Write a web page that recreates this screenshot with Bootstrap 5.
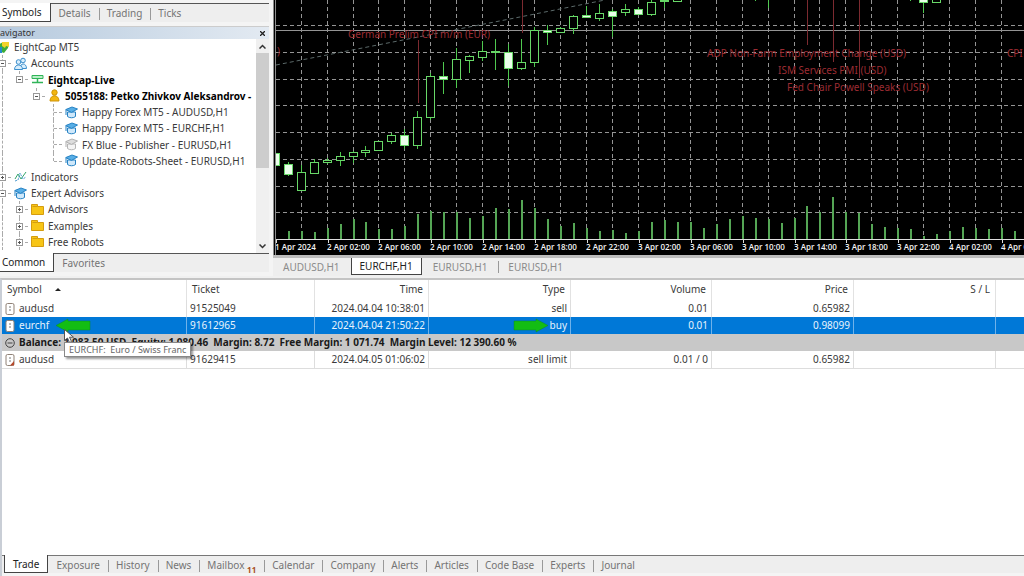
<!DOCTYPE html>
<html lang="en">
<head>
<meta charset="utf-8">
<meta name="viewport" content="width=device-width, initial-scale=1">
<title>MetaTrader 5</title>
<link rel="stylesheet" href="https://cdn.jsdelivr.net/npm/bootstrap@5.3.0/dist/css/bootstrap.min.css">
<style>
  body { font: 10px/16px "Noto Sans", "Open Sans", sans-serif; color: #3a3a3a; background: #f0f0f0; overflow: hidden; }
  button { font: inherit; color: inherit; background: none; border: 0; padding: 0; }
  ul { list-style: none; margin: 0; padding: 0; }

  .side { width: 273px; background: #f4f4f4; overflow: hidden; padding-top: 3px; }
  .side-inner { width: 269px; }
  .tabstrip { background: #eee; color: #747474; border-top: 1px solid #555; height: 19px; }
  .tabstrip button { padding: 0 8px; height: 18px; position: relative; white-space: nowrap; flex: none; line-height: 16px; }
  .tabstrip button + button:not(.first)::before { content: ""; position: absolute; left: 0; top: 4px; height: 12px; border-left: 1px solid #999; }
  .tabstrip .on { background: #fff; color: #222; border-right: 1px solid #444; border-bottom: 1px solid #444; margin-top: -1px; height: 19px; }
  .side .tabstrip .on { padding-left: 2px; }
  .rule { height: 5px; border-bottom: 1px solid #ccc; }
  .navhead { height: 12px; line-height: 12px; font-size: 9px; background: linear-gradient(90deg, #b6cade, #e3eaf2); color: #333; }
  .tree { height: 214px; background: #fff; }
  .tree ul { margin-left: -6px; padding-bottom: 3px; }
  .tree li { flex: 1; white-space: nowrap; }
  .tree li > svg { width: 13px; height: 13px; margin: 0 4px 0 3px; flex: none; }
  .rail { width: 17px; position: relative; align-self: stretch; flex: none; }
  .rail.v::before { content: ""; position: absolute; left: 8px; top: 0; bottom: 0; border-left: 1px dashed #aaa; }
  .rail.end::before { bottom: 50%; }
  .rail.h::after { content: ""; position: absolute; left: 9px; right: 0; top: 8px; border-top: 1px dashed #aaa; }
  .rail button { position: absolute; z-index: 1; left: 5px; top: 5px; width: 7px; height: 7px; border: 1px solid #999; background: #fff; }
  .rail button::before { content: ""; position: absolute; left: 1px; right: 1px; top: 2px; border-top: 1px solid #555; }
  .rail .plus::after { content: ""; position: absolute; top: 1px; bottom: 1px; left: 2px; border-left: 1px solid #555; }
  .scroll { width: 13px; background: #f0f0f0; flex: none; }
  .scroll button { height: 14px; line-height: 0; }
  .thumb { height: 115px; background: #cdcdcd; }

  .chartbox { border-left: 3px double #8c8c8c; background: #000; line-height: 0; }
  .chartbox svg { width: 100%; height: 255px; }
  .chart-tabs { border-top: 3px solid #bcbcbc; height: 21px; color: #8b8b8b; background: #eee; }
  .chart-tabs button { padding: 0 10px; height: 17px; margin-right: 1px; }
  .chart-tabs .on { background: #fff; color: #222; padding: 0 8px; border: solid #444; border-width: 0 1px 1px; }
  .chart-tabs .sep { position: relative; }
  .chart-tabs .sep::before { content: ""; position: absolute; left: 0; top: 3px; height: 12px; border-left: 1px solid #999; }

  .toolbox { border-top: 2px solid #c4c4c4; border-left: 2px solid #c9ced6; background: #fff; margin-top: 2px; }
  .trades { table-layout: fixed; width: 100%; border-collapse: separate; border-spacing: 0; }
  .trades th { font-weight: 400; height: 20px; padding: 0 5px 2px; border-right: 1px solid #e2e2e2; line-height: 18px; }
  .trades td { height: 17px; padding: 0 3px; line-height: 17px; border-right: 1px solid #ddd; white-space: nowrap; position: relative; }
  .trades tbody tr:last-child td { border-bottom: 1px solid #ddd; }
  .trades th:last-child, .trades td:last-child { border-right: 0; }
  .trades .sel td { background: #0078d7; color: #e8f3fc; border-right-color: #6fb2ea; }
  .trades .sum td { background: #c8c8c8; color: #1a1a1a; font-weight: 700; }
  .trades .ico { width: 10px; height: 12px; margin-right: 4px; }
  .over { position: absolute; overflow: visible; }
  .tip { position: absolute; z-index: 3; left: 62px; top: 25px; height: 15px; line-height: 13px; font-size: 9px; padding: 0 4px; background: #fff; color: #666; border: 1px solid #888; box-shadow: 2px 2px 2px rgba(0,0,0,.4); }
  .bottom { border-left: 2px solid #c9ced6; background: #f4f4f4; padding-bottom: 3px; }
  .bottom .tabstrip { height: 18px; padding-left: 2px; border-top-color: #777; }
  .bottom .tabstrip button { height: 17px; }
  .bottom .tabstrip .on { height: 18px; border-left: 1px solid #444; }
  .unread { font-size: 8px; font-weight: 700; line-height: 0; color: #a8501c; vertical-align: -4px; }
</style>
</head>
<body class="d-flex flex-column min-vh-100">

<svg width="0" height="0" class="position-absolute" aria-hidden="true">
  <symbol id="cap" viewBox="0 0 13 13"><path d="M2.500 6v4.500c2 1.700 6 1.700 8 0V6z" fill="#cfe8fa" stroke="#2682c4"/><path d="M.7 3.600 7 1l5.500 2-6 3.400z" fill="#58aee6" stroke="#2682c4"/><path d="M1 4v5" stroke="#2682c4"/></symbol>
  <symbol id="capoff" viewBox="0 0 13 13"><path d="M2.500 6v4.500c2 1.700 6 1.700 8 0V6z" fill="#f4f4f4" stroke="#b5b5b5"/><path d="M.7 3.600 7 1l5.500 2-6 3.400z" fill="#ddd" stroke="#b0b0b0"/><path d="M1 4v5" stroke="#b0b0b0"/></symbol>
  <symbol id="folder" viewBox="0 0 13 13"><path d="M.5 1.500h6v2h6v8H.5z" fill="#f7c516" stroke="#d49c10"/><path d="M6.500 3.500h-5" stroke="#d49c10"/></symbol>
  <symbol id="doc" viewBox="0 0 10 12"><rect x="1" y=".5" width="8" height="11" rx="1.500" fill="#fff" stroke="#8f8176"/><path d="M4 4h2M4 7h2" stroke="#777"/></symbol>
</svg>

<div class="d-flex">
  <aside class="side flex-shrink-0">
    <div class="side-inner d-flex flex-column">
      <nav class="tabstrip d-flex" aria-label="Market watch">
        <button class="on">Symbols</button><button class="first">Details</button><button>Trading</button><button>Ticks</button>
      </nav>
      <div class="rule"></div>
      <div class="navhead d-flex justify-content-between pe-1"><span>avigator</span><button aria-label="Close"><svg width="5" height="5"><path d="M0 0l5 5M5 0L0 5" stroke="#222" stroke-width="1.300"/></svg></button></div>
      <div class="tree d-flex">
        <ul class="d-flex flex-column flex-fill">
          <li class="d-flex align-items-center"><svg viewBox="0 0 13 13"><path d="M1 4l5-3 6 1-1 5-4 5-5-2z" fill="#3dad3a"/><path d="M5 1h7v5l-3-1-1 2-3-2z" fill="#f3d22b"/><path d="M1 6h4v6H2z" fill="#2689cf"/></svg>EightCap MT5</li>
          <li class="d-flex align-items-center"><span class="rail v h"><button aria-label="Collapse"></button></span><svg viewBox="0 0 13 13" fill="#d9eefc" stroke="#3c8fcd"><circle cx="9" cy="3.500" r="2.300"/><path d="M6 11.500c0-6 6.500-6 6.500 0z"/><circle cx="4.500" cy="5" r="2.300"/><path d="M.5 12.500c0-6 8-6 8 0z"/></svg>Accounts</li>
          <li class="d-flex align-items-center fw-bold text-black"><span class="rail v"></span><span class="rail v end h"><button aria-label="Collapse"></button></span><svg viewBox="0 0 13 13"><path d="M1 2.500h11v3H1z" fill="#b9efc7" stroke="#30b458"/><path d="M6.500 6v3M1 9.500h11" stroke="#30b458" stroke-width="1.500"/></svg>Eightcap-Live</li>
          <li class="d-flex align-items-center fw-bold text-black"><span class="rail v"></span><span class="rail"></span><span class="rail v end h"><button aria-label="Collapse"></button></span><svg viewBox="0 0 13 13" fill="#f3b712" stroke="#cf9408"><circle cx="6.500" cy="3.500" r="2.700"/><path d="M2 12c0-7 9-7 9 0z"/></svg>5055188: Petko Zhivkov Aleksandrov -</li>
          <li class="d-flex align-items-center"><span class="rail v"></span><span class="rail"></span><span class="rail"></span><span class="rail v h"></span><svg><use href="#cap"/></svg>Happy Forex MT5 - AUDUSD,H1</li>
          <li class="d-flex align-items-center"><span class="rail v"></span><span class="rail"></span><span class="rail"></span><span class="rail v h"></span><svg><use href="#cap"/></svg>Happy Forex MT5 - EURCHF,H1</li>
          <li class="d-flex align-items-center"><span class="rail v"></span><span class="rail"></span><span class="rail"></span><span class="rail v h"></span><svg><use href="#capoff"/></svg>FX Blue - Publisher - EURUSD,H1</li>
          <li class="d-flex align-items-center"><span class="rail v"></span><span class="rail"></span><span class="rail"></span><span class="rail v end h"></span><svg><use href="#cap"/></svg>Update-Robots-Sheet - EURUSD,H1</li>
          <li class="d-flex align-items-center"><span class="rail v h"><button class="plus" aria-label="Expand"></button></span><svg viewBox="0 0 13 13" fill="none"><path d="M1 9l3-5 3 5 5-7" stroke="#35a66b"/><path d="M1 11l3-1 2-7 3 6 3-2" stroke="#4e9bd0" stroke-dasharray="2 1"/></svg>Indicators</li>
          <li class="d-flex align-items-center"><span class="rail v h"><button aria-label="Collapse"></button></span><svg><use href="#cap"/></svg>Expert Advisors</li>
          <li class="d-flex align-items-center"><span class="rail v"></span><span class="rail v h"><button class="plus" aria-label="Expand"></button></span><svg><use href="#folder"/></svg>Advisors</li>
          <li class="d-flex align-items-center"><span class="rail v"></span><span class="rail v h"><button class="plus" aria-label="Expand"></button></span><svg><use href="#folder"/></svg>Examples</li>
          <li class="d-flex align-items-center"><span class="rail v"></span><span class="rail v h"><button class="plus" aria-label="Expand"></button></span><svg><use href="#folder"/></svg>Free Robots</li>
        </ul>
        <div class="scroll d-flex flex-column">
          <button aria-label="Scroll up"><svg width="7" height="5"><path d="M.5 4.500l3-3 3 3" fill="none" stroke="#333" stroke-width="1.500"/></svg></button>
          <div class="thumb"></div>
          <button class="mt-auto" aria-label="Scroll down"><svg width="7" height="5"><path d="M.5.5l3 3 3-3" fill="none" stroke="#333" stroke-width="1.500"/></svg></button>
        </div>
      </div>
      <nav class="tabstrip d-flex" aria-label="Navigator views"><button class="on">Common</button><button class="first">Favorites</button></nav>
    </div>
  </aside>

  <main class="flex-fill overflow-hidden">
    <div class="chartbox">
      <svg id="chart" viewBox="276 0 748 255" preserveAspectRatio="xMinYMin slice" role="img" aria-label="EURCHF hourly chart"></svg>
    </div>
    <nav class="chart-tabs d-flex" aria-label="Charts">
      <button>AUDUSD,H1</button><button class="on">EURCHF,H1</button><button>EURUSD,H1</button><button class="sep">EURUSD,H1</button>
    </nav>
  </main>
</div>

<section class="toolbox flex-fill">
  <table class="trades">
    <colgroup><col style="width:185px"><col style="width:128px"><col style="width:114px"><col style="width:142px"><col style="width:141px"><col style="width:142px"><col style="width:142px"><col></colgroup>
    <thead>
      <tr><th>Symbol <svg class="ms-2" width="10" height="8"><path d="M3 5l3-3 3 3z" fill="#222"/></svg></th><th>Ticket</th><th class="text-end">Time</th><th class="text-end">Type</th><th class="text-end">Volume</th><th class="text-end">Price</th><th class="text-end">S / L</th><th></th></tr>
    </thead>
    <tbody>
      <tr><td><svg class="ico"><use href="#doc"/></svg>audusd</td><td>91525049</td><td class="text-end">2024.04.04 10:38:01</td><td class="text-end">sell</td><td class="text-end">0.01</td><td class="text-end">0.65982</td><td></td><td></td></tr>
      <tr class="sel"><td><svg class="ico"><use href="#doc"/></svg>eurchf
          <svg class="over" style="left:54px;top:2px" width="34" height="13"><path d="M0 6.500L12 0v2h22v9H12v2z" fill="#13bd13" stroke="#0b8a2a" stroke-width=".5"/></svg>
          <svg class="over z-3" style="left:62px;top:12px" width="10" height="15"><path d="M.5.5v11l3-2.500 2 4.500 2-1-2-4.300h4z" fill="#fff" stroke="#555"/></svg>
          <span class="tip" role="tooltip">EURCHF:&nbsp; Euro / Swiss Franc</span></td>
        <td>91612965</td><td class="text-end">2024.04.04 21:50:22</td>
        <td class="text-end"><svg class="over" style="right:22px;top:2px" width="34" height="13"><path d="M34 6.500L22 0v2H0v9h22v2z" fill="#13bd13" stroke="#0b8a2a" stroke-width=".5"/></svg>buy</td><td class="text-end">0.01</td><td class="text-end">0.98099</td><td></td><td></td></tr>
      <tr class="sum"><td colspan="8"><svg class="ico" viewBox="0 0 10 12"><circle cx="5" cy="6" r="4.300" fill="none" stroke="#444"/><path d="M2.500 6h5" stroke="#444"/></svg>Balance: 1 083.50 USD&nbsp; Equity: 1 080.46&nbsp; Margin: 8.72&nbsp; Free Margin: 1 071.74&nbsp; Margin Level: 12 390.60 %</td></tr>
      <tr><td><svg class="ico" viewBox="0 0 10 12"><use href="#doc"/><path d="M9 7v4.500H5z" fill="#b5482a"/></svg>audusd</td><td>91629415</td><td class="text-end">2024.04.05 01:06:02</td><td class="text-end">sell limit</td><td class="text-end">0.01 / 0</td><td class="text-end">0.65982</td><td></td><td></td></tr>
    </tbody>
  </table>
</section>
<footer class="bottom">
  <nav class="tabstrip d-flex" aria-label="Toolbox">
    <button class="on">Trade</button><button class="first">Exposure</button><button>History</button><button>News</button><button>Mailbox <span class="unread">11</span></button><button>Calendar</button><button>Company</button><button>Alerts</button><button>Articles</button><button>Code Base</button><button>Experts</button><button>Journal</button>
  </nav>
</footer>

<script src="https://cdn.jsdelivr.net/npm/bootstrap@5.3.0/dist/js/bootstrap.bundle.min.js"></script>
<script>
  // One bar per hour; candle = [bar, high, open/close top, open/close bottom, low, filled]
  const barX = k => 275.7 + 12.97 * k;
  const candles = [[0,153,153,165,165,1],[1,162,164,174,176,1],[2,165,172,190,191,0],[3,159,162,173,173,0],[4,158,160,162,164,0],[5,152,156,160,166,0],[6,151,152,156,163,0],[7,146,150,152,157,0],[8,141,141,150,150,0],[9,133,135,141,144,0],[10,129,135,145,149,1],[11,111,117,145,149,0],[12,73,76,117,120,0],[13,62,76,79,94,1],[14,48,59,79,88,0],[15,55,56,60,73,0],[16,41,51,57,61,0],[17,39,51,52,70,1],[18,44,52,68,86,1],[19,39,62,68,70,0],[20,27,30,62,67,0],[21,25,30,32,45,1],[22,27,28,32,33,0],[23,15,16,28,34,0],[24,6,15,17,18,1],[25,4,13,18,21,0],[26,9,11,16,37,1],[27,4,9,12,16,0],[28,7,9,14,15,1],[29,0,2,14,16,0],[30,0,0,1,8,0],[31,0,-2,1,2,0],[37,-4,-4,-4,1,0],[38,-4,-4,-3,8,0],[49,-4,-4,-4,1,0],[50,-4,-4,2,13,1],[51,-4,-4,2,2,0]];
  const volumes = [8,8,7,11,15,20,17,10,10,13,25,28,27,27,21,23,31,30,39,31,20,13,16,11,8,9,6,8,17,19,17,17,11,15,20,23,21,20,16,21,33,27,42,27,26,15,12,11,10,3,5,8,12,11,10,11,8];
  const labels = ['1 Apr 2024','2 Apr 02:00','2 Apr 06:00','2 Apr 10:00','2 Apr 14:00','2 Apr 18:00','2 Apr 22:00','3 Apr 02:00','3 Apr 06:00','3 Apr 10:00','3 Apr 14:00','3 Apr 18:00','3 Apr 22:00','4 Apr 02:00','4 Apr 0'];
  const news = [[348,38,'German Prelim CPI m/m (EUR)'],[707,57,'ADP Non-Farm Employment Change (USD)'],[778,74,'ISM Services PMI (USD)'],[787,91,'Fed Chair Powell Speaks (USD)'],[1007,57,'CPI'],[277,55,')']];
  let s = '<g stroke="#949494" stroke-dasharray="4 3">';
  for (let k = 2; k < 58; k += 2) s += `<path d="M${Math.round(barX(k)) - .5} 0V239"/>`;
  for (let i = 0; i < 8; i++) s += `<path d="M276 ${Math.round(25.3 + 26.7 * i) + .5}H1024"/>`;
  s += '</g><path d="M276 65L530 15 605 0" fill="none" stroke="#5c6a6a" stroke-dasharray="4 3"/>';
  s += '<path d="M276 30.500H1024" stroke="#949494"/>';
  s += '<path d="M418.500 40V103M522.500 0V33M807.500 0V45M833.500 0V62M859.500 0V78" stroke="#7c2a30"/>';
  news.forEach(([x, y, t]) => s += `<text x="${x}" y="${y}" font-size="10" fill="#9c2c33">${t}</text>`);
  volumes.forEach((v, i) => s += `<rect x="${Math.round(barX(i + 1)) - 1}" y="${239 - v}" width="2" height="${v}" fill="#55a655"/>`);
  candles.forEach(([k, hi, a, b, lo, f]) => {
    const x = Math.round(barX(k)) - .5;
    s += `<path d="M${x} ${hi}V${lo}" stroke="#4fc94f"/><rect x="${x - 4}" y="${a + .5}" width="8" height="${b - a}" fill="${f ? '#eaffea' : '#000'}" stroke="#68d868"/>`;
  });
  s += '<path d="M276 239.500H1024" stroke="#ddd"/>';
  labels.forEach((t, i) => s += `<path d="M${Math.round(barX(4 * i)) + .5} 239v4" stroke="#ddd"/><text x="${Math.round(barX(4 * i)) - 1}" y="250" font-size="8" font-weight="600" font-family="Open Sans" fill="#f4f4f4">${t}</text>`);
  document.getElementById('chart').innerHTML = s;
</script>
</body>
</html>
